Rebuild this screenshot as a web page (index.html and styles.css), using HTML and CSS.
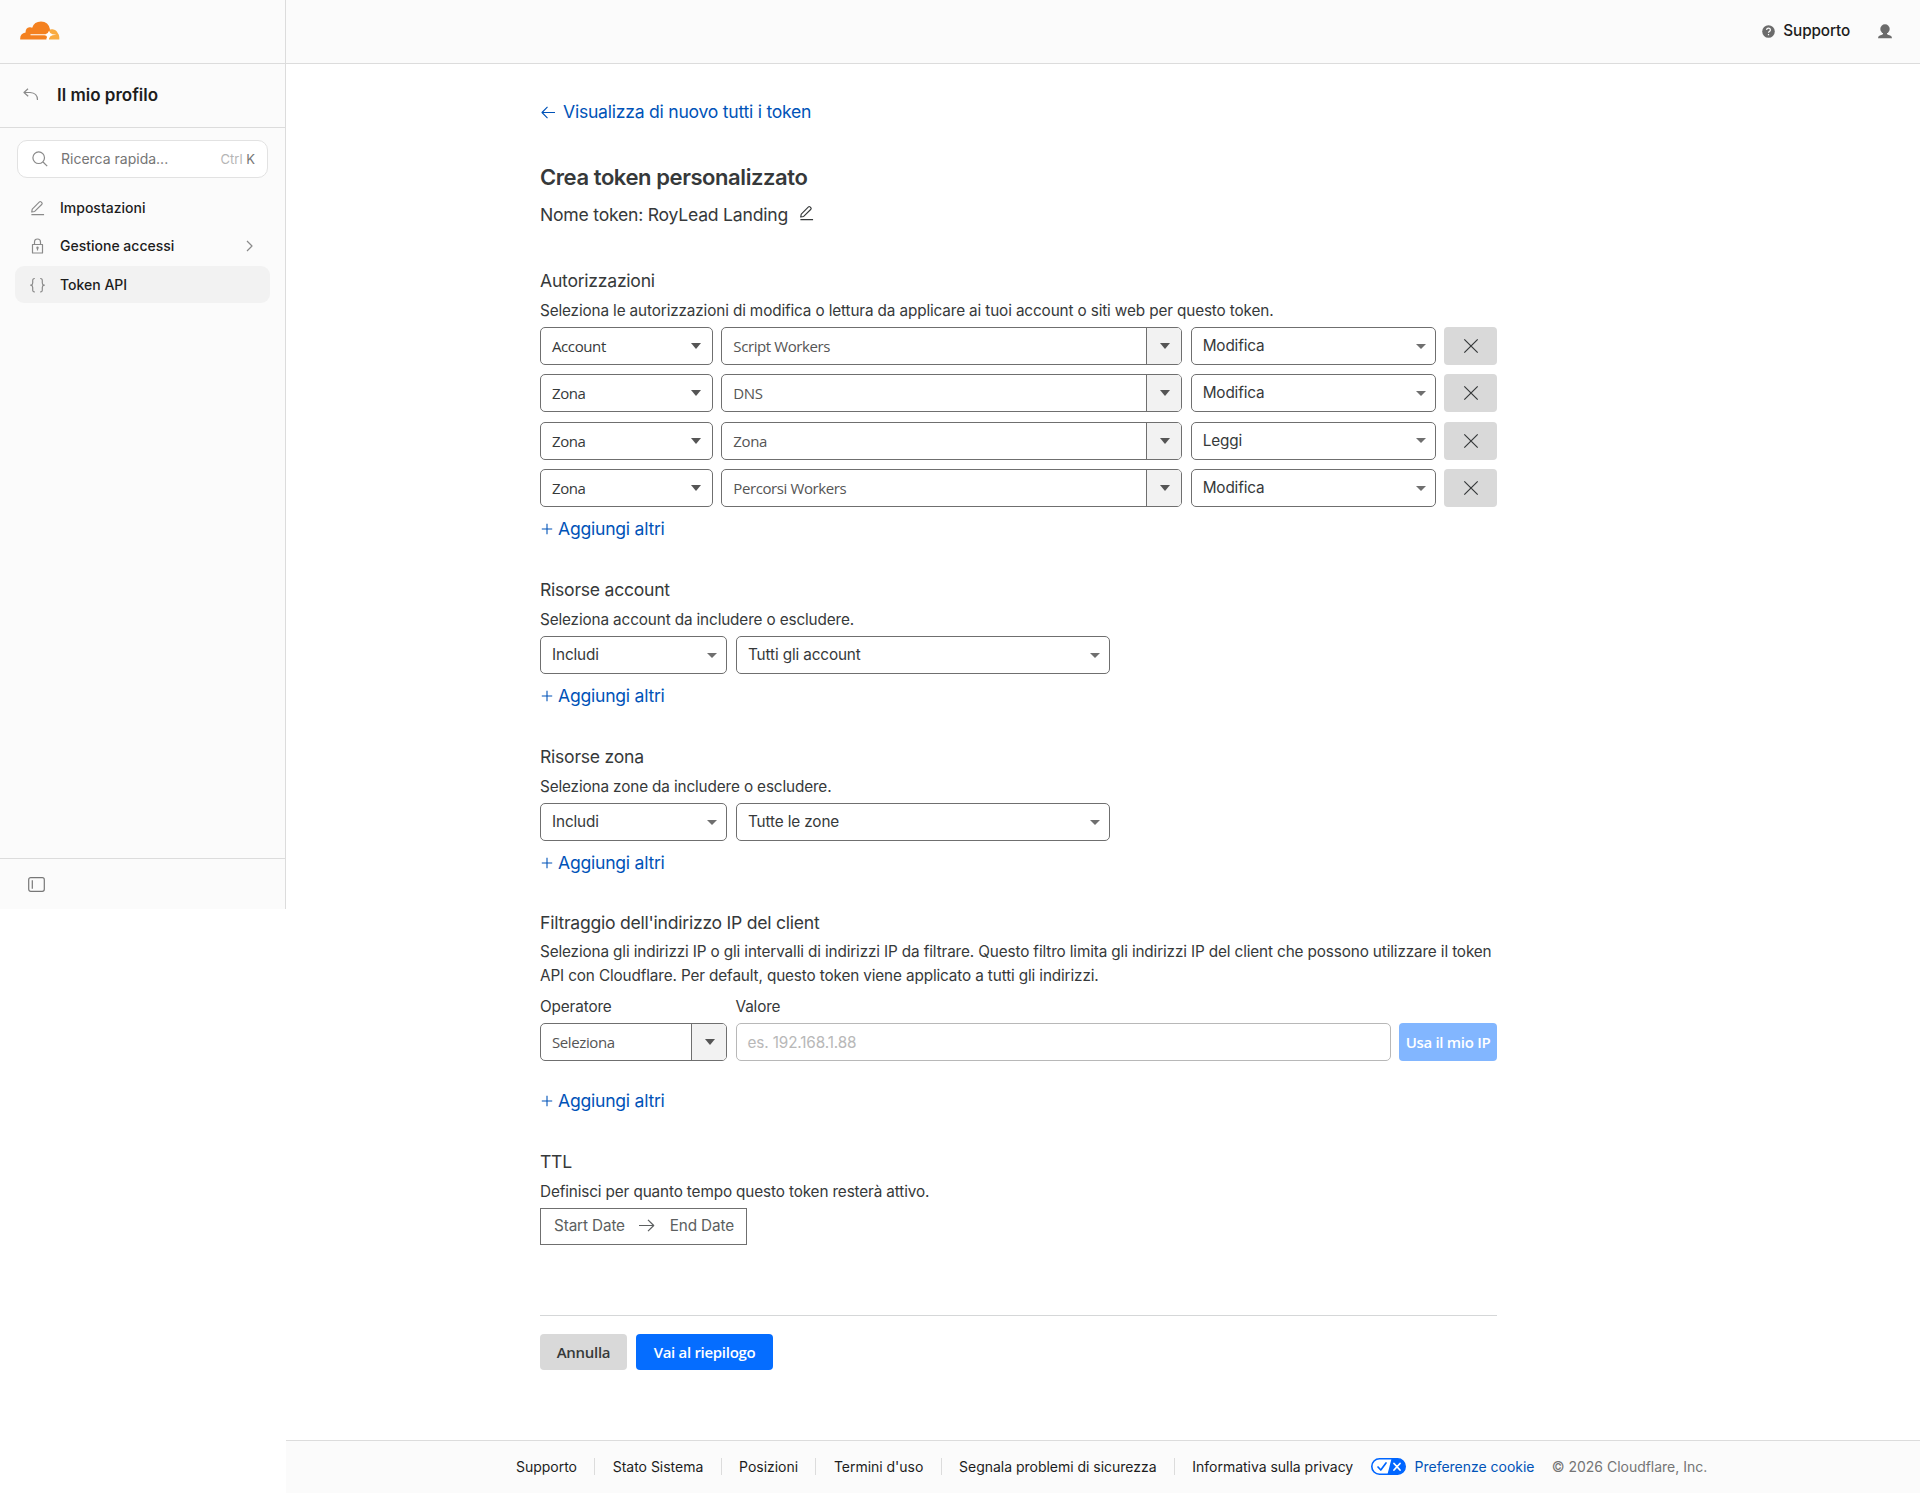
FILE: index.html
```html
<!DOCTYPE html>
<html lang="it">

<head>
  <meta charset="UTF-8">
  <meta name="viewport" content="width=device-width, initial-scale=1.0">
  <title>Crea token personalizzato</title>
  <link rel="stylesheet" href="styles.css">
</head>

<body>
  <svg class="defs" width="0" height="0">
    <symbol id="pencil" viewBox="0 0 16 16">
      <path d="M1.500 15H15M1.800 12.300l.6-3.200L10.100 1.400q.8-.7 1.600 0l1 1q.7.800 0 1.600L5 11.700z" />
    </symbol>
    <symbol id="cross" viewBox="0 0 16 16">
      <path d="M1.300 1.300l13.400 13.400M14.700 1.300L1.300 14.700" />
    </symbol>
    <symbol id="plus" viewBox="0 0 12 12">
      <path d="M6 .8v10.400M.8 6h10.400" />
    </symbol>
  </svg>

  <div class="app">
    <aside class="sidebar">
      <div class="logo">
        <svg width="40" height="19" viewBox="0 0 40 19">
          <path fill="#f9ab41" d="M29 18.500V8.800Q30.500 8 32.500 8.200Q36.600 8.600 37.800 12.300Q39.600 14 39.300 18.500z" />
          <path fill="#f48120" d="M.2 18.500Q-.2 12.500 5.600 11.600Q5.300 7 9.500 6.300Q11 6.100 12.200 6.800Q14.200.4 21 .4Q28.500.6 30 8.200L26.500 18.500z" />
          <path fill="#fff" d="M10.500 13.200H25.500Q28.200 12.800 29 9.800Q29.800 12.800 32.500 13.200L36.500 13.700L32.500 14.200Q30 14.500 29 17.500L28.300 18.500H26.300L27 16Q26.800 14.300 24.500 14.200H10.500z" />
        </svg>
      </div>
      <div class="profile">
        <svg class="icon" width="16" height="13" viewBox="0 0 16 13">
          <path d="M5 .8L1 4.500l4.200 3.700M1.200 4.500H7Q14.500 4.800 14.500 12" />
        </svg>
        <span>Il mio profilo</span>
      </div>
      <nav class="menu">
        <div class="search">
          <svg class="icon" width="16" height="16" viewBox="0 0 16 16">
            <circle cx="6.700" cy="6.700" r="5.800" />
            <path d="M11 11l4.200 4.200" />
          </svg>
          <span class="search-text">Ricerca rapida...</span>
          <span class="keys">Ctrl <b>K</b></span>
        </div>
        <div class="item">
          <svg class="icon" width="15" height="16"><use href="#pencil" /></svg>
          <span>Impostazioni</span>
        </div>
        <div class="item">
          <svg class="icon" width="15" height="16" viewBox="0 0 15 16">
            <path d="M2.500 6.500h10v8.500h-10zM4.500 6.500V4Q4.500 1 7.500 1t3 3v2.500M7.500 9.500v3" />
            <circle cx="7.500" cy="9.800" r=".6" />
          </svg>
          <span>Gestione accessi</span>
          <svg class="icon chevron" width="7" height="12" viewBox="0 0 7 12">
            <path d="M1 1l5 5-5 5" />
          </svg>
        </div>
        <div class="item active">
          <svg class="icon" width="15" height="16" viewBox="0 0 15 16">
            <path d="M4.800 1.500Q2.500 1.300 2.700 4v2Q2.700 8 .7 8.200q2 .2 2 2.200v2q-.2 2.700 2.100 2.500M10.200 1.500q2.300-.2 2.100 2.500v2q0 2 2 2.200-2 .2-2 2.200v2q.2 2.700-2.100 2.500" />
          </svg>
          <span>Token API</span>
        </div>
      </nav>
      <div class="collapse">
        <svg width="17" height="15" viewBox="0 0 17 15">
          <rect x=".7" y=".7" width="15.600" height="13.600" rx="2" />
          <path d="M4.300 3.300v8.400" />
        </svg>
      </div>
    </aside>

    <div class="page">
      <header class="topbar">
        <svg width="13" height="13" viewBox="0 0 13 13">
          <circle cx="6.500" cy="6.500" r="6.300" fill="#6b6b6b" />
          <path d="M4.600 5Q4.700 3.200 6.500 3.200T8.400 4.900Q8.400 5.800 7.300 6.400Q6.500 6.900 6.500 7.800M6.500 9v1.200" fill="none" stroke="#fff" stroke-width="1.200" />
        </svg>
        <span class="support">Supporto</span>
        <svg width="14" height="15" viewBox="0 0 14 15">
          <circle cx="7" cy="5" r="4.700" fill="#6b6b6b" />
          <path fill="#6b6b6b" d="M5 8h4v1.800q0 .7 1 .9l2.200.7q1.800.6 1.800 2.800H0q0-2.200 1.800-2.800l2.200-.7q1-.2 1-.9z" />
        </svg>
      </header>

      <main class="content">
        <a class="back">
          <svg width="14" height="13" viewBox="0 0 14 13">
            <path d="M6.500.8L1 6.500l5.500 5.700M1 6.500h13" />
          </svg>
          <span>Visualizza di nuovo tutti i token</span>
        </a>
        <h1>Crea token personalizzato</h1>
        <div class="name">
          <span>Nome token: RoyLead Landing</span>
          <svg width="15" height="16"><use href="#pencil" /></svg>
        </div>

        <section>
          <h2>Autorizzazioni</h2>
          <p>Seleziona le autorizzazioni di modifica o lettura da applicare ai tuoi account o siti web per questo token.</p>
          <div class="permissions">
            <div class="row">
              <div class="select native"><span>Account</span></div>
              <div class="select combo"><span>Script Workers</span><i></i></div>
              <div class="select"><span>Modifica</span></div>
              <div class="remove"><svg width="16" height="16"><use href="#cross" /></svg></div>
            </div>
            <div class="row">
              <div class="select native"><span>Zona</span></div>
              <div class="select combo"><span>DNS</span><i></i></div>
              <div class="select"><span>Modifica</span></div>
              <div class="remove"><svg width="16" height="16"><use href="#cross" /></svg></div>
            </div>
            <div class="row">
              <div class="select native"><span>Zona</span></div>
              <div class="select combo"><span>Zona</span><i></i></div>
              <div class="select"><span>Leggi</span></div>
              <div class="remove"><svg width="16" height="16"><use href="#cross" /></svg></div>
            </div>
            <div class="row">
              <div class="select native"><span>Zona</span></div>
              <div class="select combo"><span>Percorsi Workers</span><i></i></div>
              <div class="select"><span>Modifica</span></div>
              <div class="remove"><svg width="16" height="16"><use href="#cross" /></svg></div>
            </div>
          </div>
          <a class="add"><svg width="12" height="12"><use href="#plus" /></svg><span>Aggiungi altri</span></a>
        </section>

        <section>
          <h2>Risorse account</h2>
          <p>Seleziona account da includere o escludere.</p>
          <div class="resources">
            <div class="select"><span>Includi</span></div>
            <div class="select"><span>Tutti gli account</span></div>
          </div>
          <a class="add"><svg width="12" height="12"><use href="#plus" /></svg><span>Aggiungi altri</span></a>
        </section>

        <section>
          <h2>Risorse zona</h2>
          <p>Seleziona zone da includere o escludere.</p>
          <div class="resources">
            <div class="select"><span>Includi</span></div>
            <div class="select"><span>Tutte le zone</span></div>
          </div>
          <a class="add"><svg width="12" height="12"><use href="#plus" /></svg><span>Aggiungi altri</span></a>
        </section>

        <section class="filter">
          <h2>Filtraggio dell'indirizzo IP del client</h2>
          <p>Seleziona gli indirizzi IP o gli intervalli di indirizzi IP da filtrare. Questo filtro limita gli indirizzi IP del client che possono utilizzare il token<br>API con Cloudflare. Per default, questo token viene applicato a tutti gli indirizzi.</p>
          <div class="ip">
            <label>Operatore</label>
            <label>Valore</label>
            <span></span>
            <div class="select combo"><span>Seleziona</span><i></i></div>
            <div class="input">es. 192.168.1.88</div>
            <button class="use-ip">Usa il mio IP</button>
          </div>
          <a class="add"><svg width="12" height="12"><use href="#plus" /></svg><span>Aggiungi altri</span></a>
        </section>

        <section>
          <h2>TTL</h2>
          <p>Definisci per quanto tempo questo token resterà attivo.</p>
          <div class="dates">
            <span>Start Date</span>
            <svg width="16" height="13" viewBox="0 0 16 13">
              <path d="M9 .8l5.700 5.700L9 12.200M0 6.500h14.500" />
            </svg>
            <span>End Date</span>
          </div>
        </section>

        <div class="actions">
          <button class="cancel">Annulla</button>
          <button class="next">Vai al riepilogo</button>
        </div>
      </main>

      <footer class="footer">
        <a>Supporto</a>
        <i></i>
        <a>Stato Sistema</a>
        <i></i>
        <a>Posizioni</a>
        <i></i>
        <a>Termini d'uso</a>
        <i></i>
        <a>Segnala problemi di sicurezza</a>
        <i></i>
        <a>Informativa sulla privacy</a>
        <a class="cookies">
          <svg width="35" height="17" viewBox="0 0 35 17">
            <rect x=".8" y=".8" width="33.400" height="15.400" rx="7.700" fill="#fff" stroke="#0066ff" stroke-width="1.600" />
            <path fill="#0066ff" d="M20.500.8h6a7.700 7.700 0 0 1 0 15.400h-10z" />
            <path fill="none" stroke="#0066ff" stroke-width="1.700" stroke-linecap="round" d="M7 9l2.800 3L15 5" />
            <path fill="none" stroke="#fff" stroke-width="1.800" stroke-linecap="round" d="M23 5.500l6 6.500M29 5.500l-6 6.500" />
          </svg>
          <span>Preferenze cookie</span>
        </a>
        <span class="copy">© 2026 Cloudflare, Inc.</span>
      </footer>
    </div>
  </div>
</body>

</html>
```

FILE: styles.css
```css
* {
  margin: 0;
  padding: 0;
  box-sizing: border-box;
}

body {
  font-family: Inter, sans-serif;
  font-size: 15.3px;
  line-height: 24px;
  letter-spacing: -0.13px;
  color: #36393a;
  background: #fff;
}

svg {
  flex: none;
}

svg path {
  stroke-linejoin: round;
}

.defs {
  display: block;
}

.app {
  display: flex;
  align-items: flex-start;
}

/* sidebar */
.sidebar {
  display: flex;
  flex-direction: column;
  width: 286px;
  height: 909px;
  flex: none;
  background: #fbfbfb;
  border-right: 1px solid #dcdcdc;
  color: #1d1d1d;
  letter-spacing: 0;
}

.logo {
  height: 64px;
  padding: 21px 20px 0;
  border-bottom: 1px solid #dcdcdc;
}

.logo svg {
  display: block;
}

.profile {
  display: flex;
  align-items: center;
  height: 64px;
  padding: 0 0 2px 23px;
  gap: 18px;
  border-bottom: 1px solid #dcdcdc;
  font-size: 17px;
  font-weight: 600;
}

.icon {
  fill: none;
  stroke: #8a8a8a;
  stroke-width: 1.2;
}

.menu {
  flex: 1;
  padding: 12px 15px 0;
}

.search {
  display: flex;
  align-items: center;
  height: 38px;
  margin: 0 2px 11px;
  padding: 0 12px 0 14px;
  border: 1px solid #e2e2e2;
  border-radius: 10px;
  background: #fff;
  font-size: 14px;
  color: #757575;
}

.search-text {
  flex: 1;
  margin-left: 13px;
}

.keys {
  font-size: 13px;
  color: #b5b5b5;
}

.keys b {
  font-weight: 400;
  color: #757575;
}

.item {
  display: flex;
  align-items: center;
  height: 37px;
  margin-bottom: 1.7px;
  padding: 0 17px 0 15px;
  gap: 15px;
  border-radius: 9px;
  font-size: 14px;
  font-weight: 500;
}

.item.active {
  background: #f2f2f2;
}

.chevron {
  margin-left: auto;
}

.collapse {
  height: 51px;
  padding: 18px 27.5px 0;
  border-top: 1px solid #dcdcdc;
}

.collapse svg {
  display: block;
  fill: none;
  stroke: #777;
  stroke-width: 1.2;
}

/* page */
.page {
  flex: 1;
}

.topbar {
  display: flex;
  align-items: center;
  justify-content: flex-end;
  height: 64px;
  padding: 0 28px 1px 0;
  background: #fbfbfb;
  border-bottom: 1px solid #dcdcdc;
  color: #1d1d1d;
  font-weight: 500;
}

.support {
  margin: 0 28px 0 8px;
}

.content {
  width: 957px;
  height: 1376px;
  margin-left: 254px;
  padding-top: 36px;
}

.back,
.add {
  display: flex;
  align-items: center;
  font-size: 17.6px;
  letter-spacing: -0.25px;
  color: #0053b8;
}

.back svg,
.add svg {
  fill: none;
  stroke: #0053b8;
  stroke-width: 1.1;
}

.back {
  gap: 8px;
  padding-left: 1px;
}

.add {
  gap: 5px;
  margin-top: 10px;
  padding-left: 1px;
}

h1 {
  margin-top: 39px;
  font-size: 22px;
  line-height: 28px;
  font-weight: 600;
  letter-spacing: -0.42px;
}

.name {
  display: flex;
  gap: 11px;
  margin-top: 12px;
  font-size: 17.6px;
  letter-spacing: -0.23px;
}

.name svg {
  margin-top: 2px;
  fill: none;
  stroke: #36393a;
  stroke-width: 1.2;
}

section {
  margin-top: 37px;
}

.name+section {
  margin-top: 42px;
}

h2 {
  margin-bottom: 6px;
  font-size: 17.6px;
  line-height: 24px;
  font-weight: 400;
  letter-spacing: -0.25px;
}

p {
  margin-bottom: 4px;
  white-space: nowrap;
}

.permissions {
  display: flex;
  flex-direction: column;
  gap: 9.4px;
}

.row {
  display: grid;
  grid-template-columns: 173px 461px 245px 53px;
  column-gap: 8.33px;
}

.resources {
  display: grid;
  grid-template-columns: 187px 374px;
  gap: 9px;
}

.select {
  display: flex;
  align-items: center;
  justify-content: space-between;
  height: 38px;
  padding: 0 9px 0 11px;
  border: 1px solid #6f6f6f;
  border-radius: 5px;
}

.select::after,
.combo i::after {
  content: '';
  border: 5px solid transparent;
  border-top-color: #6f6f6f;
  border-bottom: 0;
}

.native,
.combo {
  font-family: "Open Sans", sans-serif;
  font-size: 15px;
  letter-spacing: -0.4px;
}

.native {
  padding-right: 11px;
}

.native::after,
.combo i::after {
  border-top: 6px solid #555;
}

.combo {
  padding-right: 0;
  color: #555;
}

.combo::after {
  display: none;
}

.combo i {
  display: flex;
  align-items: center;
  justify-content: center;
  width: 35px;
  height: 36px;
  padding-left: 2px;
  border-left: 1px solid #6f6f6f;
  border-radius: 0 4px 4px 0;
  background: #f2f2f2;
}

.remove {
  display: flex;
  align-items: center;
  justify-content: center;
  height: 38px;
  padding-left: 1px;
  border-radius: 4px;
  background: #d9d9d9;
}

.remove svg {
  fill: none;
  stroke: #36393a;
  stroke-width: 1.2;
}

.filter {
  margin-top: 36px;
}

.filter h2 {
  margin-bottom: 5px;
}

.filter p {
  margin-bottom: 7px;
}

.ip {
  display: grid;
  grid-template-columns: 187px 655px 98px;
  column-gap: 8.5px;
  row-gap: 4px;
}

.filter .add {
  margin-top: 28px;
}

.input {
  height: 38px;
  padding: 7px 11px;
  border: 1px solid #b8b8b8;
  border-radius: 5px;
  color: #b8b8b8;
}

button {
  border: 0;
  border-radius: 4px;
  font-family: "Open Sans", sans-serif;
  font-size: 15px;
  font-weight: 600;
  letter-spacing: -0.3px;
  white-space: nowrap;
}

.use-ip {
  background: #82b6ff;
  color: #fff;
}

.dates {
  display: flex;
  align-items: center;
  justify-content: space-between;
  width: 207px;
  height: 37px;
  padding: 0 12px 2px 13px;
  border: 1px solid #6f6f6f;
  color: #5c5f60;
}

.dates svg {
  fill: none;
  stroke: #5c5f60;
  stroke-width: 1.2;
}

.actions {
  display: flex;
  gap: 9px;
  margin-top: 70px;
  padding-top: 18px;
  border-top: 1px solid #d5d7d8;
}

.actions button {
  height: 36px;
}

.cancel {
  width: 87px;
  background: #d9d9d9;
  color: #36393a;
}

.next {
  width: 137px;
  background: #056dff;
  color: #fff;
}

.footer {
  display: flex;
  align-items: center;
  gap: 17.4px;
  height: 53px;
  padding: 0 0 1px 230px;
  border-top: 1px solid #dcdcdc;
  background: #fbfbfb;
  font-size: 14px;
  letter-spacing: -0.02px;
  color: #1d1d1d;
  white-space: nowrap;
}

.footer i {
  width: 1px;
  height: 17px;
  background: #dcdcdc;
}

.cookies {
  display: flex;
  align-items: center;
  gap: 9px;
  color: #0053b8;
}

.copy {
  color: #757575;
}
```
